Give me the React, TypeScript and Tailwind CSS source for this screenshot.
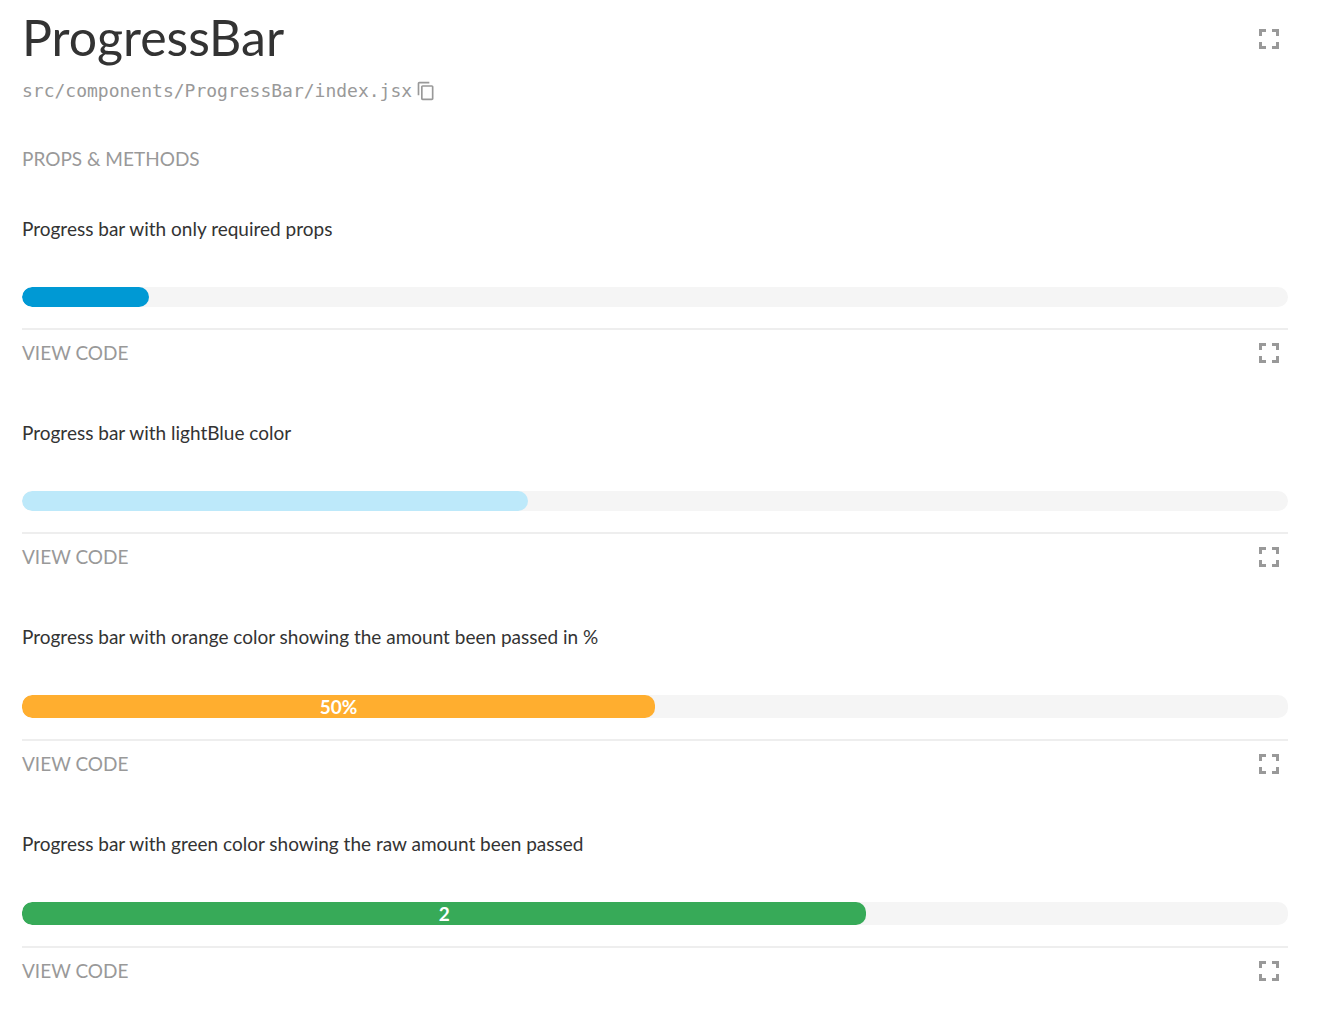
import React from 'react';

function ExpandIcon() {
  return (
    <svg viewBox="0 0 20 20" className="size-5" fill="none" stroke="currentColor" strokeWidth="3" aria-hidden="true">
      <path d="M1.500 7V1.500H7M13 1.500h5.500V7M18.500 13v5.500H13M7 18.500H1.500V13" />
    </svg>
  );
}

function ExpandButton({ label }: { label: string }) {
  return (
    <button type="button" aria-label={label} className="mr-[9px] text-[#999]">
      <ExpandIcon />
    </button>
  );
}

type Bar = { title: string; percent: number; color: string; text?: string };

const bars: Bar[] = [
  { title: 'Progress bar with only required props', percent: 10, color: 'bg-[#0099d4]' },
  { title: 'Progress bar with lightBlue color', percent: 40, color: 'bg-[#bde9fa]' },
  { title: 'Progress bar with orange color showing the amount been passed in %', percent: 50, color: 'bg-[#ffae2f]', text: '50%' },
  { title: 'Progress bar with green color showing the raw amount been passed', percent: 66.7, color: 'bg-[#37aa58]', text: '2' },
];

function Example({ title, percent, color, text }: Bar) {
  return (
    <section className="mb-14">
      <h2 className="text-[19px] leading-6">{title}</h2>
      <div className={`mt-[46px] overflow-hidden rounded-[10px] bg-[#f5f5f5] ${text ? 'h-[23px]' : 'h-5'}`}>
        <div
          className={`flex h-full items-center justify-center rounded-[10px] text-[19px] font-bold leading-none text-white ${color}`}
          style={{ width: `${percent}%` }}
        >
          {text}
        </div>
      </div>
      <div className="mt-[21px] flex items-center justify-between border-t-2 border-[#eee] pt-[11px]">
        <button type="button" className="text-[19px] leading-6 text-[#999]">VIEW CODE</button>
        <ExpandButton label={`Open example: ${title}`} />
      </div>
    </section>
  );
}

export default function App() {
  return (
    <main className="min-h-screen bg-white pl-[22px] pr-[54px] pt-3 font-['Lato',sans-serif] text-[#333]">
      <header className="flex h-[54px] items-center justify-between">
        <h1 className="pb-1 text-[50px] leading-[50px]">ProgressBar</h1>
        <ExpandButton label="Open component" />
      </header>
      <div className="mt-[13px] flex items-center gap-1 text-[#999]">
        <code className="font-['DejaVu_Sans_Mono',monospace] text-lg leading-6">src/components/ProgressBar/index.jsx</code>
        <button type="button" aria-label="Copy path">
          <svg viewBox="0 0 24 24" className="size-5" fill="currentColor" aria-hidden="true">
            <path d="M16 1H4c-1.100 0-2 .9-2 2v14h2V3h12V1zm3 4H8c-1.100 0-2 .9-2 2v14c0 1.100.9 2 2 2h11c1.100 0 2-.9 2-2V7c0-1.100-.9-2-2-2zm0 16H8V7h11v14z" />
          </svg>
        </button>
      </div>
      <button type="button" className="mt-11 mb-[46px] block text-[19px] leading-6 text-[#999]">PROPS &amp; METHODS</button>
      {bars.map((bar) => (
        <Example key={bar.title} {...bar} />
      ))}
    </main>
  );
}
